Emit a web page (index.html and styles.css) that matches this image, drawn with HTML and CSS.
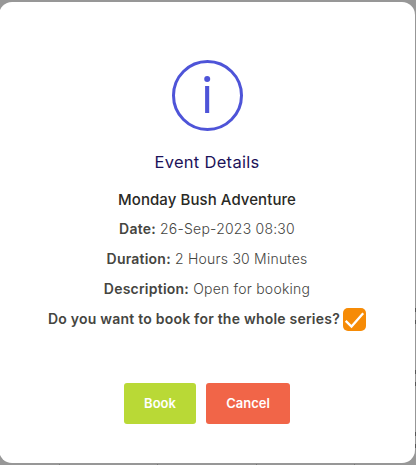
FILE: index.html
```
<!DOCTYPE html>
<html lang="en">
<head>
    <meta charset="UTF-8">
    <title>Event Details</title>
    <meta name="viewport" content="width=device-width, initial-scale=1" />
    <link rel="stylesheet" href="styles.css">
</head>
<body>
    <div class="backdrop">
        <div class="modal">
            <svg class="modal-icon" width="72" height="72" viewBox="0 0 72 72">
                <circle cx="36.5" cy="36.5" r="34" fill="none" stroke="#4e54d8" stroke-width="3" />
                <circle cx="36.2" cy="20" r="3" fill="#4e54d8" />
                <rect x="34.1" y="27" width="4.1" height="27" fill="#4e54d8" />
            </svg>
            <h2 class="modal-title">Event Details</h2>
            <div class="modal-content">
                <h3 class="event-name">Monday Bush Adventure</h3>
                <p><b>Date:</b> 26-Sep-2023 08:30</p>
                <p><b>Duration:</b> 2 Hours 30 Minutes</p>
                <p><b>Description:</b> Open for booking</p>
                <label class="series">
                    <b>Do you want to book for the whole series?</b>
                    <svg class="checkbox" width="23" height="23" viewBox="0 0 23 23">
                        <rect width="23" height="23" rx="5" fill="#f68b06" />
                        <path d="M2.7 12.9L8.5 18.6L20.2 5.2" fill="none" stroke="#fff" stroke-width="2.3" />
                    </svg>
                </label>
            </div>
            <div class="modal-actions">
                <button class="btn btn-book">Book</button>
                <button class="btn btn-cancel">Cancel</button>
            </div>
        </div>
        <!-- page rows and columns showing past the modal -->
        <svg class="page-lines" width="416" height="465">
            <path d="M415.5 308v4m0 8v4m0 46v4m0 8v4m0 46v4m0 8v4" stroke="#555" />
            <path d="M59 464.5h1m97 0h1m98 0h1m97 0h1" stroke="#777" />
        </svg>
    </div>
</body>
</html>
```
FILE: styles.css
```
body {
    margin: 0;
    font-family: Inter, "Liberation Sans", sans-serif;
}

.backdrop {
    position: relative;
    box-sizing: border-box;
    width: 416px;
    height: 465px;
    padding: 2px 1px 2px 0;
    overflow: hidden;
    background: #979797;
}

.modal {
    display: flex;
    flex-direction: column;
    align-items: center;
    box-sizing: border-box;
    height: 461px;
    margin-left: -1px;
    padding-top: 57px;
    border-radius: 13px;
    background: #fff;
}

.modal-icon {
    display: block;
}

.modal-title {
    margin: 20px 0 0;
    color: #1c1259;
    font-size: 16.5px;
    font-weight: 400;
    line-height: 22px;
    letter-spacing: 0.3px;
}

.modal-content {
    display: flex;
    flex-direction: column;
    align-items: center;
    margin-top: 12px;
    color: #45453f;
    font-size: 14px;
    font-weight: 300;
    line-height: 30px;
    letter-spacing: 0.22px;
}

.modal-content p {
    margin: 0;
}

.modal-content b {
    font-weight: 600;
}

.modal-content .event-name {
    margin: 0;
    color: #292925;
    font-size: 15px;
    font-weight: 500;
    line-height: 29px;
    letter-spacing: 0.07px;
}

.series {
    display: flex;
    align-items: center;
    gap: 3px;
}

.modal-actions {
    display: flex;
    gap: 10px;
    margin-top: 49px;
}

.btn {
    width: 72px;
    height: 41px;
    padding: 0 0 1px;
    border: 0;
    border-radius: 3px;
    color: #fff;
    font-family: inherit;
    font-size: 13px;
    font-weight: 600;
}

.btn-book {
    background: #b9d936;
}

.btn-cancel {
    width: 84px;
    background: #f16548;
}

.page-lines {
    position: absolute;
    top: 0;
    left: 0;
}
```
